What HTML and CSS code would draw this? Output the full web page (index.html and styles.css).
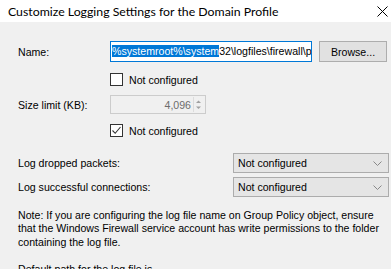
FILE: index.html
```html
<html>
<head>
    <link rel="stylesheet" href="styles.css">
</head>
<body>
    <div class="titlebar">
        <span class="title">Customize Logging Settings for the Domain Profile</span>
        <svg class="close" width="11" height="11" viewBox="0 0 11 11">
            <path d="M0.5 0.5 L10.5 10.5 M10.5 0.5 L0.5 10.5" stroke="#000" stroke-width="1" fill="none"/>
        </svg>
    </div>

    <div class="content">
        <div class="row name-row">
            <label class="label">Name:</label>
            <div class="textbox"><span class="sel">%systemroot%\system</span>32\logfiles\firewall\p</div>
            <button class="btn">Browse...</button>
        </div>

        <div class="check-row first-check">
            <span class="checkbox"></span>
            <span>Not configured</span>
        </div>

        <div class="row size-row">
            <label class="label">Size limit (KB):</label>
            <div class="spinbox">
                <span class="spin-value">4,096</span>
                <span class="spin-arrows">
                    <svg width="9" height="15" viewBox="0 0 9 15">
                        <path d="M2 6 L4.5 3.5 L7 6 Z" fill="#a0a0a0"/>
                        <path d="M2 9.5 L4.5 12 L7 9.5 Z" fill="#a0a0a0"/>
                    </svg>
                </span>
            </div>
        </div>

        <div class="check-row second-check">
            <span class="checkbox">
                <svg width="11" height="11" viewBox="0 0 11 11">
                    <path d="M1.5 5.5 L4.2 8.3 L9.5 2" stroke="#333" stroke-width="1.1" fill="none"/>
                </svg>
            </span>
            <span>Not configured</span>
        </div>

        <div class="row combo-row dropped">
            <label class="label wide">Log dropped packets:</label>
            <div class="combo">
                <span>Not configured</span>
                <svg class="chevron" width="9" height="5" viewBox="0 0 9 5">
                    <path d="M0.5 0.5 L4.5 4.5 L8.5 0.5" stroke="#888" stroke-width="1" fill="none"/>
                </svg>
            </div>
        </div>

        <div class="row combo-row">
            <label class="label wide">Log successful connections:</label>
            <div class="combo">
                <span>Not configured</span>
                <svg class="chevron" width="9" height="5" viewBox="0 0 9 5">
                    <path d="M0.5 0.5 L4.5 4.5 L8.5 0.5" stroke="#888" stroke-width="1" fill="none"/>
                </svg>
            </div>
        </div>

        <p class="note">Note: If you are configuring the log file name on Group Policy object, ensure that the Windows Firewall service account has write permissions to the folder containing the log file.</p>
        <p class="note">Default path for the log file is</p>
    </div>
</body>
</html>
```

FILE: styles.css
```css
body {
    margin: 0;
    background-color: #f0f0f0;
    color: #000;
    font-family: "Liberation Sans", Arial, sans-serif;
    font-size: 10.6px;
    overflow: hidden;
}

.titlebar {
    height: 22px;
    background-color: #fff;
    display: flex;
    align-items: center;
    justify-content: space-between;
    padding: 0 3px 0 8px;
}

.title {
    font-family: Lato, sans-serif;
    font-size: 12.3px;
    color: #000;
}

.content {
    padding-left: 18px;
}

.row {
    display: flex;
    align-items: center;
}

.label {
    width: 92px;
    flex-shrink: 0;
}

.label.wide {
    width: 215px;
}

.name-row {
    margin-top: 19px;
    height: 21px;
}

.textbox {
    width: 199px;
    height: 19px;
    border: 1px solid #0078d7;
    background-color: #fff;
    white-space: nowrap;
    overflow: hidden;
    line-height: 19px;
    padding-left: 1px;
    flex-shrink: 0;
}

.textbox .sel {
    background-color: #0078d7;
    color: #fff;
}

.btn {
    margin-left: 7px;
    width: 68px;
    height: 21px;
    background-color: #e1e1e1;
    border: 1px solid #adadad;
    font-family: "Liberation Sans", Arial, sans-serif;
    font-size: 10.6px;
    color: #000;
    padding: 0;
    flex-shrink: 0;
}

.check-row {
    display: flex;
    align-items: center;
    padding-left: 92px;
    height: 13px;
}

.first-check {
    margin-top: 11px;
}

.second-check {
    margin-top: 10px;
}

.checkbox {
    width: 11px;
    height: 11px;
    border: 1px solid #333;
    background-color: #fff;
    margin-right: 6px;
    display: flex;
}

.size-row {
    margin-top: 9px;
    height: 19px;
}

.spinbox {
    width: 94px;
    height: 17px;
    border: 1px solid #cccccc;
    display: flex;
    align-items: center;
    justify-content: flex-end;
    color: #6d6d6d;
}

.spin-value {
    margin-right: 2px;
}

.spin-arrows {
    width: 10px;
    height: 15px;
    border-left: 1px solid #dcdcdc;
    margin-right: 1px;
    display: flex;
}

.combo-row {
    height: 20px;
    margin-top: 4px;
}

.combo-row.dropped {
    margin-top: 16px;
}

.combo {
    width: 156px;
    height: 20px;
    border: 1px solid #acacac;
    background-color: #e5e5e5;
    display: flex;
    align-items: center;
    justify-content: space-between;
    padding: 0 6px 0 4px;
    box-sizing: border-box;
    flex-shrink: 0;
}

.note {
    margin: 12px 0 0 0;
    line-height: 13.4px;
    width: 370px;
}

.note + .note {
    margin-top: 13.4px;
}
```
